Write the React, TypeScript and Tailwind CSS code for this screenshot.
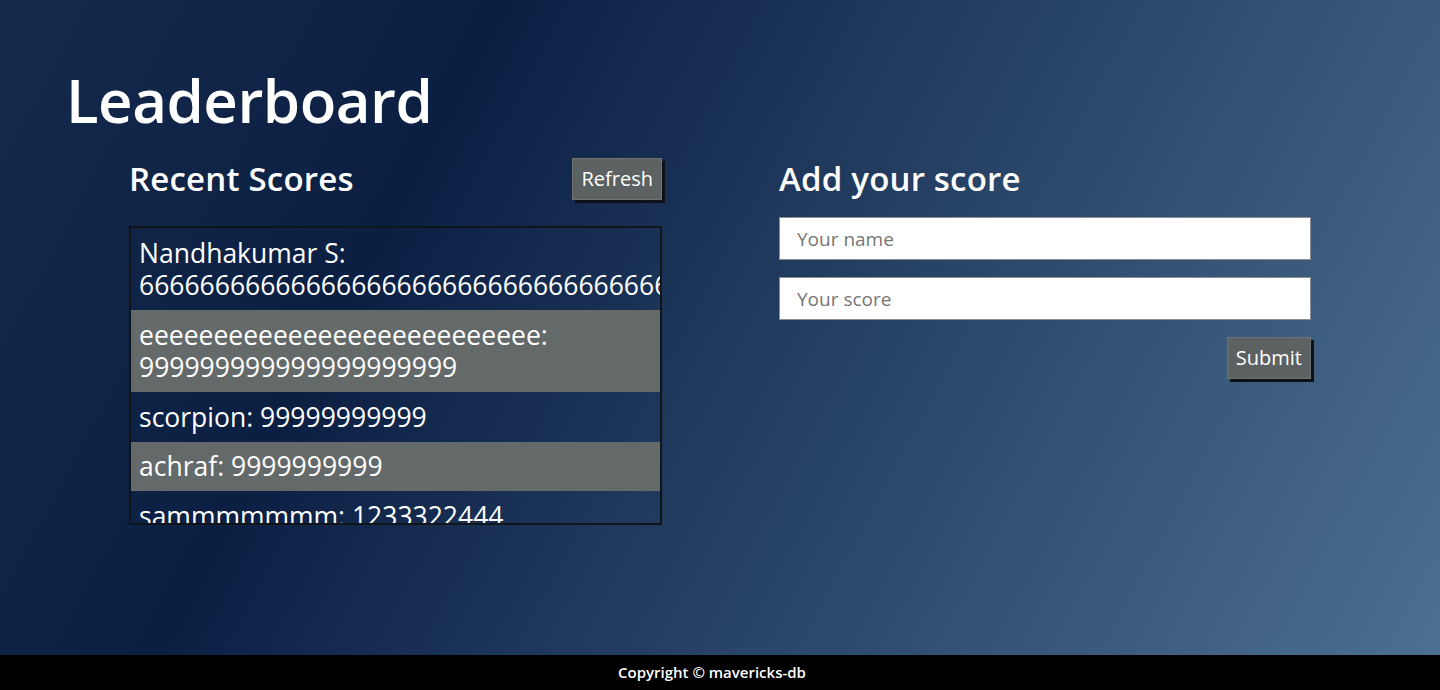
import React from "react";

const scores = [
  { name: "Nandhakumar S", score: "66666666666666666666666666666666666666666" },
  { name: "eeeeeeeeeeeeeeeeeeeeeeeeeee", score: "999999999999999999999" },
  { name: "scorpion", score: "99999999999" },
  { name: "achraf", score: "9999999999" },
  { name: "sammmmmmm", score: "1233322444" },
  { name: "test", score: "1000" },
];

const btn =
  "bg-[#5c6161] border border-[#6e7373] text-white text-[20px] font-medium leading-none px-[8px] py-[10px] shadow-[3px_3px_0_#0d1014]";

export default function App() {
  return (
    <div className="min-h-[690px] flex flex-col font-['Open_Sans',sans-serif] text-white bg-[linear-gradient(118deg,#142a4c_0%,#0b1f43_28%,#2a4669_62%,#4d7192_100%)]">
      <main className="flex-1 pl-[66px] pt-[64px]">
        <h1 className="text-[60px] font-semibold leading-[72px] tracking-[-0.5px]">Leaderboard</h1>

        <div className="flex gap-[117px] pl-[63px] mt-[20px]">
          {/* recent scores */}
          <section className="w-[533px]">
            <div className="flex items-center justify-between h-[46px]">
              <h2 className="text-[33px] font-semibold tracking-[0.2px]">Recent Scores</h2>
              <button className={btn}>Refresh</button>
            </div>
            <ul className="mt-[24px] h-[299px] overflow-hidden border-2 border-[#111418]">
              {scores.map((s, i) => (
                <li
                  key={s.name}
                  className={`px-[8px] py-[8.5px] text-[26.5px] font-medium leading-[32.5px] ${
                    i % 2 === 1 ? "bg-[#646a6a]" : ""
                  }`}
                >
                  {s.name}: {s.score}
                </li>
              ))}
            </ul>
          </section>

          {/* add score */}
          <section className="w-[534px]">
            <div className="flex items-center h-[46px]">
              <h2 className="text-[33px] font-semibold tracking-[0.2px]">Add your score</h2>
            </div>
            <form className="flex flex-col gap-[17px] mt-[15px]" onSubmit={(e) => e.preventDefault()}>
              <input
                placeholder="Your name"
                className="w-[532px] h-[43px] bg-white border border-[#8a8f96] px-[17px] text-[19px] text-black placeholder:text-[#767676] outline-none"
              />
              <input
                placeholder="Your score"
                className="w-[532px] h-[43px] bg-white border border-[#8a8f96] px-[17px] text-[19px] text-black placeholder:text-[#767676] outline-none"
              />
              <div className="flex justify-end w-[532px]">
                <button className={btn}>Submit</button>
              </div>
            </form>
          </section>
        </div>
      </main>

      <footer className="h-[35px] bg-black flex items-center justify-center pr-[16px] text-[15px] font-semibold">
        Copyright © mavericks-db
      </footer>
    </div>
  );
}
